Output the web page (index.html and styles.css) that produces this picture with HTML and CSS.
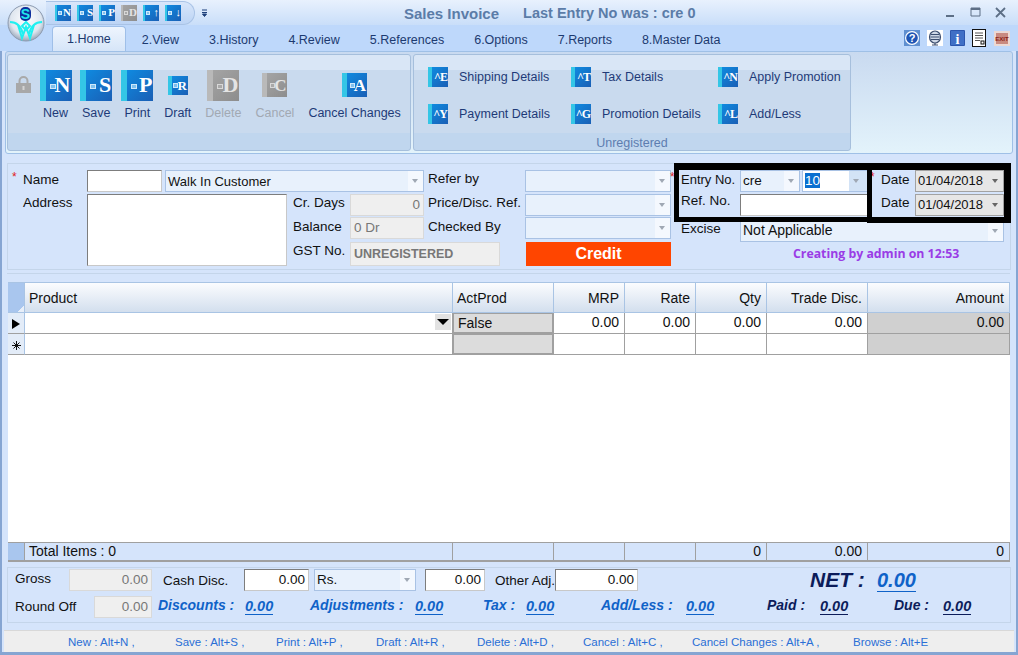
FILE: index.html
```html
<!DOCTYPE html>
<html>
<head>
<meta charset="utf-8">
<title>Sales Invoice</title>
<link rel="stylesheet" href="styles.css">
</head>
<body>
<div class="window">

  <!-- title bar -->
  <div class="titlebar">
    <svg class="logo" width="38" height="38" viewBox="0 0 38 38">
      <defs>
        <radialGradient id="orb" cx="0.5" cy="0.4" r="0.6">
          <stop offset="0" stop-color="#ffffff"/>
          <stop offset="0.7" stop-color="#dfe6ef"/>
          <stop offset="1" stop-color="#98a6b8"/>
        </radialGradient>
      </defs>
      <circle cx="19" cy="19" r="18" fill="url(#orb)" stroke="#8d9bb0"/>
      <rect x="13" y="3" width="11" height="14" rx="5" fill="#0d2f9c"/>
      <text x="18.500" y="14.500" class="logo-s">S</text>
      <g fill="none" stroke="#1ff0f0" stroke-width="2">
        <polyline points="11,21 15,34 19,23 23,34 27,21"/>
        <path d="M3 18 C10 18 14 22 16 30"/>
        <path d="M35 18 C28 18 24 22 22 30"/>
        <path d="M19 18 L15 22 L19 26 L23 22 Z"/>
      </g>
    </svg>
    <div class="qat">
      <span class="bk bk-qat"><i></i><b>N</b></span>
      <span class="bk bk-qat"><i></i><b>S</b></span>
      <span class="bk bk-qat"><i></i><b>P</b></span>
      <span class="bk bk-qat off"><i></i><b>D</b></span>
      <span class="bk bk-qat"><i></i><b>&#8593;</b></span>
      <span class="bk bk-qat"><i></i><b>&#8595;</b></span>
    </div>
    <svg class="qat-more" width="7" height="8" viewBox="0 0 7 8"><path d="M1 1h5M1 3.500h5M1.500 5h4L3.500 7.500z" stroke="#1d3f7a" fill="#1d3f7a" stroke-width="1"/></svg>
    <div class="title"><span>Sales Invoice</span><span class="title-last">Last Entry No was : cre 0</span></div>
    <div class="winbtns">
      <svg width="11" height="11" viewBox="0 0 11 11"><rect x="1" y="8" width="8" height="2" fill="#5d6f86"/></svg>
      <svg width="11" height="11" viewBox="0 0 11 11"><path d="M1 1h9v8H1z" fill="none" stroke="#5d6f86"/><rect x="1" y="1" width="9" height="2" fill="#5d6f86"/></svg>
      <svg width="11" height="11" viewBox="0 0 11 11"><path d="M1 1l9 9M10 1l-9 9" stroke="#5d6f86" stroke-width="1.800"/></svg>
    </div>
  </div>

  <!-- tabs -->
  <div class="tabs">
    <span class="tab active">1.Home</span>
    <span class="tab">2.View</span>
    <span class="tab">3.History</span>
    <span class="tab">4.Review</span>
    <span class="tab">5.References</span>
    <span class="tab">6.Options</span>
    <span class="tab">7.Reports</span>
    <span class="tab">8.Master Data</span>
    <div class="tools">
      <svg width="16" height="16" viewBox="0 0 16 16"><rect width="16" height="16" fill="#5f8fd0"/><circle cx="8" cy="8" r="7" fill="#fff"/><circle cx="8" cy="8" r="5.800" fill="#1f55b5"/><text x="8" y="12" class="tool-q">?</text></svg>
      <svg width="16" height="16" viewBox="0 0 16 16"><rect width="16" height="16" fill="#fff"/><ellipse cx="8" cy="7" rx="5.500" ry="6" fill="#cfd8e6" stroke="#3d4f70" stroke-width="1.200"/><path d="M4 4.500h8M3.500 7h9M4 9.500h8" stroke="#3d4f70"/><path d="M5 15h6M8 13v2" stroke="#3d4f70" stroke-width="1.200"/></svg>
      <svg width="15" height="16" viewBox="0 0 15 16"><rect width="15" height="16" rx="1" fill="#2c56ad"/><rect x="1" y="1" width="13" height="14" fill="#3f6fc6"/><text x="7.500" y="13.500" class="tool-i">i</text></svg>
      <svg width="15" height="18" viewBox="0 0 15 18"><rect x="0.500" y="0.500" width="13" height="17" fill="#fff" stroke="#111"/><path d="M3 4h8M3 6.500h8M3 9h8M3 11.500h5" stroke="#555"/><rect x="9" y="12" width="3" height="3" fill="#fff" stroke="#111"/></svg>
      <svg width="16" height="15" viewBox="0 0 16 15"><rect width="16" height="15" fill="#ecd9d4"/><rect x="2" y="2" width="12" height="11" fill="#c98a80"/><text x="8" y="10" class="tool-x">EXIT</text></svg>
    </div>
  </div>

  <!-- ribbon -->
  <div class="ribbon">
    <div class="group group-home">
      <svg class="lock" width="17" height="17" viewBox="0 0 17 17"><path d="M4.500 8V5a4 4 0 0 1 8 0v3" fill="none" stroke="#a9a9a9" stroke-width="2"/><rect x="1" y="7" width="15" height="10" fill="#a8a8a8"/><rect x="7.500" y="10" width="2" height="4" fill="#d4d4d4"/></svg>
      <button class="rb"><span class="rb-icon"><span class="bk bk-lg"><i></i><b>N</b></span></span>New</button>
      <button class="rb"><span class="rb-icon"><span class="bk bk-lg"><i></i><b>S</b></span></span>Save</button>
      <button class="rb"><span class="rb-icon"><span class="bk bk-lg"><i></i><b>P</b></span></span>Print</button>
      <button class="rb"><span class="rb-icon"><span class="bk bk-dr"><i></i><b>R</b></span></span>Draft</button>
      <button class="rb dim"><span class="rb-icon"><span class="bk bk-lg off"><i></i><b>D</b></span></span>Delete</button>
      <button class="rb dim"><span class="rb-icon"><span class="bk bk-md off"><i></i><b>C</b></span></span>Cancel</button>
      <button class="rb"><span class="rb-icon"><span class="bk bk-md"><i></i><b>A</b></span></span>Cancel Changes</button>
    </div>
    <div class="group group-more">
      <div class="more-grid">
        <span class="mi"><span class="bk bk-sm"><b>^E</b></span>Shipping Details</span>
        <span class="mi"><span class="bk bk-sm"><b>^T</b></span>Tax Details</span>
        <span class="mi"><span class="bk bk-sm"><b>^N</b></span>Apply Promotion</span>
        <span class="mi"><span class="bk bk-sm"><b>^Y</b></span>Payment Details</span>
        <span class="mi"><span class="bk bk-sm"><b>^G</b></span>Promotion Details</span>
        <span class="mi"><span class="bk bk-sm"><b>^L</b></span>Add/Less</span>
      </div>
      <div class="group-cap">Unregistered</div>
    </div>
  </div>

  <!-- invoice header form -->
  <div class="form-panel">
    <div class="form-grid">
      <label class="a-name"><em>*</em>Name</label>
      <div class="fld inp a-nameinp"></div>
      <div class="combo a-namecb">Walk In Customer<span class="arr"></span></div>
      <label class="a-refer">Refer by</label>
      <div class="combo a-refercb"><span class="arr"></span></div>
      <label class="a-entry"><em>*</em>Entry No.</label>
      <div class="combo a-cre">cre<span class="arr"></span></div>
      <div class="combo white a-num"><span class="sel">10</span><span class="arr arr-on"></span></div>
      <label class="a-date1"><em>*</em>Date</label>
      <div class="combo date a-dt1">01/04/2018<span class="arr"></span></div>

      <label class="a-addr">Address</label>
      <div class="fld inp a-addrbox"></div>
      <label class="a-cr">Cr. Days</label>
      <div class="fld off right a-crf">0</div>
      <label class="a-price">Price/Disc. Ref.</label>
      <div class="combo a-pricecb"><span class="arr"></span></div>
      <label class="a-refno">Ref. No.</label>
      <div class="fld inp a-refinp"></div>
      <label class="a-date2">Date</label>
      <div class="combo date a-dt2">01/04/2018<span class="arr"></span></div>

      <label class="a-bal">Balance</label>
      <div class="fld off a-balf">0 Dr</div>
      <label class="a-chk">Checked By</label>
      <div class="combo a-chkcb"><span class="arr"></span></div>
      <label class="a-exc">Excise</label>
      <div class="combo a-exccb">Not Applicable<span class="arr"></span></div>

      <label class="a-gst">GST No.</label>
      <div class="fld off bold a-gstf">UNREGISTERED</div>
      <div class="credit a-credit">Credit</div>
      <div class="creating a-creating">Creating by admin on 12:53</div>
    </div>
    <div class="mark mark-entry"></div>
    <div class="mark mark-date"></div>
  </div>

  <!-- product grid -->
  <div class="grid-panel">
    <table class="items">
      <colgroup>
        <col class="c-h"><col class="c-prod"><col class="c-act"><col class="c-num"><col class="c-num"><col class="c-num"><col class="c-act"><col class="c-amt">
      </colgroup>
      <thead>
        <tr>
          <th class="corner"></th>
          <th>Product</th>
          <th>ActProd</th>
          <th class="r">MRP</th>
          <th class="r">Rate</th>
          <th class="r">Qty</th>
          <th class="r">Trade Disc.</th>
          <th class="r">Amount</th>
        </tr>
      </thead>
      <tbody>
        <tr>
          <td class="rowh"><span class="cur"></span></td>
          <td class="prod"><span class="dd"></span></td>
          <td class="act">False</td>
          <td class="r">0.00</td>
          <td class="r">0.00</td>
          <td class="r">0.00</td>
          <td class="r">0.00</td>
          <td class="r amt">0.00</td>
        </tr>
        <tr>
          <td class="rowh"><svg class="star" width="9" height="9" viewBox="0 0 9 9"><path d="M4.500 0v9M0 4.500h9M1.500 1.500l6 6M7.500 1.500l-6 6" stroke="#111" fill="none"/></svg></td>
          <td></td>
          <td class="act"></td>
          <td></td>
          <td></td>
          <td></td>
          <td></td>
          <td class="amt"></td>
        </tr>
        <tr class="filler"><td colspan="8"></td></tr>
      </tbody>
      <tfoot>
        <tr>
          <td class="foot-h"></td>
          <td>Total Items : 0</td>
          <td></td>
          <td></td>
          <td></td>
          <td class="r">0</td>
          <td class="r">0.00</td>
          <td class="r">0</td>
        </tr>
      </tfoot>
    </table>
  </div>

  <!-- totals -->
  <div class="sum-panel">
    <div class="sum-row sum-one">
      <span class="up">Gross</span>
      <div class="fld off right s-gross">0.00</div>
      <span class="pad-cash">Cash Disc.</span>
      <div class="fld inp right s-cash">0.00</div>
      <div class="combo s-rs">Rs.<span class="arr"></span></div>
      <div class="fld inp right s-adj1">0.00</div>
      <span class="pad-other">Other Adj.</span>
      <div class="fld inp right s-adj2">0.00</div>
      <span></span>
      <span class="net">NET :</span>
      <span class="net-val">0.00</span>
    </div>
    <div class="sum-row sum-two">
      <span>Round Off</span>
      <div class="fld off right s-round">0.00</div>
      <span class="sl blue pad-disc">Discounts :</span>
      <span class="sv blue">0.00</span>
      <span class="sl blue">Adjustments :</span>
      <span class="sv blue">0.00</span>
      <span class="sl blue">Tax :</span>
      <span class="sv blue">0.00</span>
      <span class="sl blue">Add/Less :</span>
      <span class="sv blue">0.00</span>
      <span class="sl">Paid :</span>
      <span class="sv">0.00</span>
      <span class="sl">Due :</span>
      <span class="sv">0.00</span>
    </div>
  </div>

  <!-- shortcuts -->
  <div class="statusbar">
    <span>New : Alt+N ,</span>
    <span>Save : Alt+S ,</span>
    <span>Print : Alt+P ,</span>
    <span>Draft : Alt+R ,</span>
    <span>Delete : Alt+D ,</span>
    <span>Cancel : Alt+C ,</span>
    <span>Cancel Changes : Alt+A ,</span>
    <span>Browse : Alt+E</span>
  </div>
</div>
</body>
</html>
```

FILE: styles.css
```css
html, body{ margin:0; padding:0; }
body{ font-family:"Liberation Sans", Arial, sans-serif; font-size:13.500px; color:#111; }

.window{ position:relative; width:1018px; height:655px; overflow:hidden; background:#d5e4fb; box-shadow:inset 2px 0 #86a5d2, inset -2px 0 #86a5d2, inset 0 -3px #86a5d2; }

/* title bar */
.titlebar{ position:relative; display:flex; align-items:center; height:25px; background:linear-gradient(#e8f1fd, #c9def9); }
.logo{ position:absolute; left:7px; top:4px; z-index:2; }
.logo-s{ font:bold 14px "Liberation Sans", sans-serif; fill:#22e6ec; text-anchor:middle; }
.qat{ display:flex; align-items:center; gap:6px; height:22px; margin-left:46px; padding:0 13px 0 9px; border:1px solid #a9c3e6; border-left:0; border-radius:0 12px 12px 0; background:linear-gradient(#d8e6fa, #bcd4f5); }
.qat-more{ margin-left:6px; }
.title{ position:absolute; left:404px; top:5px; display:flex; gap:24px; font-size:15px; font-weight:bold; color:#5b7ca8; white-space:nowrap; }
.title-last{ font-size:14.500px; }
.winbtns{ display:flex; gap:14px; margin-left:auto; margin-right:12px; }

/* book icons */
.bk{ position:relative; flex:none; display:inline-flex; align-items:center; justify-content:flex-end; box-sizing:border-box; background:linear-gradient(135deg, #0f8ae0, #1a5fb5); border-left:solid #34c6e6; color:#fff; font-family:"Liberation Serif", serif; font-weight:bold; line-height:1; }
.bk i{ position:absolute; background:#7fc0ee; border:1px solid #cfe8fa; box-sizing:border-box; }
.bk.off{ background:linear-gradient(135deg, #a4a4a4, #8d8d8d); border-left-color:#b9b9b9; color:#e4e4e4; }
.bk.off i{ background:#a9a9a9; border-color:#d8d8d8; }
.bk-lg{ width:32px; height:31px; border-left-width:6px; font-size:22px; padding-right:1px; }
.bk-lg i{ left:4px; top:14px; width:6px; height:5px; }
.bk-md{ width:25px; height:24px; border-left-width:5px; font-size:17px; padding-right:1px; }
.bk-md i{ left:3px; top:10px; width:5px; height:5px; }
.bk-dr{ width:20px; height:19px; border-left-width:4px; font-size:13px; padding-right:1px; }
.bk-dr i{ left:1px; top:7px; width:5px; height:5px; }
.bk-qat{ width:16px; height:16px; border-left-width:2px; font-size:11px; }
.bk-qat i{ left:1px; top:6px; width:4px; height:4px; }
.bk-sm{ width:20px; height:20px; border-left-width:4px; font-size:12px; letter-spacing:-1px; padding-right:1px; }

/* tabs */
.tabs{ display:flex; align-items:flex-end; height:26px; padding-left:52px; background:#bed8fb; color:#1c3a70; font-size:12.500px; box-sizing:border-box; }
.tab{ height:24px; line-height:26px; padding:0 15px; white-space:nowrap; }
.tab.active{ padding:0 14px; margin-right:1px; background:linear-gradient(#eef5fe, #d6e5f8); border:1px solid #9fbfe8; border-bottom:0; border-radius:4px 4px 0 0; line-height:25px; }
.tools{ display:flex; align-items:center; gap:7px; margin-left:auto; margin-right:8px; align-self:center; }

/* ribbon */
.ribbon{ display:flex; gap:2px; height:103px; box-sizing:border-box; margin:0 5px; padding:2px 1px; background:linear-gradient(#c9daf0, #e3f3fb); border:1px solid #9fc0e6; border-radius:3px; color:#1e3a78; font-size:12.500px; }
.group{ flex:none; box-sizing:border-box; height:97px; border:1px solid #a6bfdc; border-radius:3px; background:linear-gradient(#d9e6f6 0, #d9e6f6 15px, #c9daee 15px, #c9daee 78px, #c0d6ee 78px); }
.group-home{ display:flex; width:404px; padding:14px 0 0 7px; }
.lock{ flex:none; margin:7px 4px 0 0; }
.rb{ display:flex; flex-direction:column; align-items:center; padding:0 7px; border:0; background:none; font:12.500px "Liberation Sans", sans-serif; color:#1e3a78; white-space:nowrap; height:60px; justify-content:flex-start; }
.rb-icon{ display:flex; align-items:center; justify-content:center; width:20px; height:32px; margin-bottom:5px; }
.rb.dim{ color:#a2a9b3; }
.group-more{ width:438px; display:flex; flex-direction:column; }
.more-grid{ display:grid; grid-template-columns:143px 147px 120px; grid-auto-rows:37px; padding:11px 0 0 14px; height:78px; box-sizing:border-box; }
.mi{ display:flex; align-items:center; gap:11px; white-space:nowrap; height:22px; }
.group-cap{ text-align:center; color:#5d7db0; font-size:12.500px; line-height:21px; }

/* header form */
.form-panel{ position:relative; box-sizing:border-box; height:107px; margin:9px 7px 0 7px; border:1px solid #c4d5ea; }
.form-grid{ display:grid; padding:6px 0 0 15px; grid-template-rows:24px 23px 25px 24px; grid-template-columns:
  [name] 64px [nameinp] 75px [nameinp-e] 3px [namecb] 122px [box-e] 6px [cr] 57px [crf] 74px [crf-e] 4px [refer] 72px [gst-e] 25px [cb] 146px [cb-e] 10px [entry] 59px [cre] 60px [cre-e] 2px [num] 66px [num-e] 13px [date] 34px [dt] 89px [dt-e]; }
.form-grid label{ line-height:18px; white-space:nowrap; position:relative; }
.form-grid label em{ position:absolute; left:-11px; top:-2px; font-style:normal; font-size:12px; color:#e02020; }

.fld{ box-sizing:border-box; height:22px; line-height:20px; padding:0 3px; white-space:nowrap; overflow:hidden; }
.fld.inp{ background:#fff; border:1px solid #7d7d7d; border-right-color:#c8c8c8; border-bottom-color:#c8c8c8; }
.fld.off{ background:#efefef; border:1px solid #d9d9d9; color:#777; }
.fld.right{ text-align:right; }
.fld.bold{ font-weight:bold; font-size:12.500px; }

.combo{ position:relative; box-sizing:border-box; height:22px; line-height:20px; padding:0 2px; background:#e8f1fc; border:1px solid #a9c2e4; white-space:nowrap; }
.combo .arr{ position:absolute; right:0; top:0; bottom:0; width:15px; background:#f4f8fe; }
.combo .arr:after{ content:""; position:absolute; left:4px; top:8px; border:3.500px solid transparent; border-top:4px solid #a0a8b4; border-bottom:0; }
.combo.white{ background:#fff; }
.combo .arr-on{ width:18px; background:#d3e3f6; }
.combo.date{ background:#e6e6e6; border-color:#a2a2a2; font-size:13px; }
.combo.date .arr{ background:none; }
.combo.date .arr:after{ border-top-color:#666; }
.sel{ background:#0a6fd0; color:#fff; }

.a-name{ grid-area:1 / name; padding-top:1px; }
.a-nameinp{ grid-area:1 / nameinp / 1 / nameinp-e; }
.a-namecb{ grid-area:1 / namecb / 1 / crf-e; font-size:13px; line-height:22px; }
.a-refer{ grid-area:1 / refer / 1 / cb; }
.a-refercb{ grid-area:1 / cb / 1 / cb-e; }
.a-entry{ grid-area:1 / entry; padding-top:1px; font-size:13px; }
.a-cre{ grid-area:1 / cre / 1 / cre-e; }
.a-num{ grid-area:1 / num / 1 / num-e; }
.a-date1{ grid-area:1 / date; padding-top:1px; }
.a-dt1{ grid-area:1 / dt / 1 / dt-e; }
.a-addr{ grid-area:2 / name; }
.a-addrbox{ grid-area:2 / nameinp / 5 / box-e; height:72px; }
.a-cr{ grid-area:2 / cr; }
.a-crf{ grid-area:2 / crf / 2 / crf-e; }
.a-price{ grid-area:2 / refer / 2 / cb; }
.a-pricecb{ grid-area:2 / cb / 2 / cb-e; }
.a-refno{ grid-area:2 / entry; margin-top:-2px; }
.a-refinp{ grid-area:2 / cre / 2 / num-e; }
.a-date2{ grid-area:2 / date; }
.a-dt2{ grid-area:2 / dt / 2 / dt-e; }
.a-bal{ grid-area:3 / cr; padding-top:1px; }
.a-balf{ grid-area:3 / crf / 3 / crf-e; }
.a-chk{ grid-area:3 / refer / 3 / cb; padding-top:1px; }
.a-chkcb{ grid-area:3 / cb / 3 / cb-e; }
.a-exc{ grid-area:3 / entry; padding-top:3px; }
.a-exccb{ grid-area:3 / cre / 3 / dt-e; margin-top:3px; font-size:14px; line-height:19px; }
.a-gst{ grid-area:4 / cr; }
.a-gstf{ grid-area:4 / crf / 4 / gst-e; height:24px; line-height:22px; }
.a-credit{ grid-area:4 / cb / 4 / cb-e; }
.a-creating{ grid-area:4 / entry / 4 / dt-e; }

.credit{ height:24px; line-height:24px; margin-left:1px; background:#ff4500; color:#fff; font-size:16px; font-weight:bold; text-align:center; }
.creating{ padding:3px 0 0 112px; font-family:"Open Sans", sans-serif; font-size:12.300px; font-weight:bold; color:#9a3ce6; white-space:nowrap; }

.mark{ position:absolute; box-sizing:border-box; border:solid #000; }
.mark-entry{ left:666px; top:-1px; width:198px; height:59px; border-width:7px 5px 5px 5px; }
.mark-date{ left:859px; top:-1px; width:144px; height:60px; border-width:7px 7px 6px 5px; }

/* product grid */
.grid-panel{ box-sizing:border-box; height:287px; margin:3px 8px 0 7px; padding-top:8px; border:1px solid #c4d5ea; border-width:1px 0 0 0; }
.items{ width:1002px; margin-left:1px; table-layout:fixed; border-collapse:separate; border-spacing:0; background:#fff; font-size:14px; }
.c-h{ width:17px; }
.c-prod{ width:428px; }
.c-act{ width:101px; }
.c-num{ width:71px; }
.c-amt{ width:142px; }
.items th, .items td{ box-sizing:border-box; padding:0 5px 0 4px; overflow:hidden; white-space:nowrap; font-weight:normal; text-align:left; }
.items th{ height:31px; background:linear-gradient(#fbfcfe, #d3dfee); border-top:1px solid #a9c4e4; border-right:1px solid #a9c4e4; border-bottom:1px solid #a9c4e4; }
.items tbody td{ height:21px; padding-bottom:2px; border-right:1px solid #a0a0a0; border-bottom:1px solid #a0a0a0; }
.items .r{ text-align:right; }
.items .corner{ background:linear-gradient(135deg, #a9c6ee 0, #a9c6ee 85%, #e8eff9 85%); }
.items .rowh{ padding:0; background:#e3ecf8; text-align:center; border-right-color:#a9c4e4; }
.cur{ display:inline-block; border:5px solid transparent; border-left:8px solid #000; border-right:0; vertical-align:middle; }
.star{ display:inline-block; vertical-align:middle; }
.items .prod{ position:relative; }
.dd{ position:absolute; right:1px; top:1px; width:16px; height:16px; background:#e2e2e2; }
.dd:after{ content:""; position:absolute; left:2px; top:5px; border:6px solid transparent; border-top:6px solid #000; border-bottom:0; }
.items .act{ background:#dcdcdc; border:2px solid #a0a0a0; border-width:1px 2px 2px 1px; padding:0 0 0 4px; }
.items .amt{ background:#d0d0d0; }
.items .filler td{ height:187px; border:0; padding:0; }
.items tfoot td{ height:17px; line-height:17px; padding-top:0; background:#d5e4fb; border-top:1px solid #a0a0a0; border-right:1px solid #a0a0a0; border-bottom:2px solid #a0a0a0; }
.items .foot-h{ background:#a9c6ee; }

/* totals */
.sum-panel{ box-sizing:border-box; height:56px; margin:7px 7px 0 7px; padding:0 0 0 7px; border:1px solid #c4d5ea; }
.sum-row{ display:grid; align-items:center; white-space:nowrap; }
.sum-one{ height:24px; grid-template-columns:54px 83px 92px 65px 107px 69px 70px 83px 172px 67px 60px; }
.sum-two{ height:27px; margin-top:1px; grid-template-columns:79px 58px 93px 65px 105px 68px 43px 75px 85px 81px 53px 74px 49px 40px; }
.up{ margin-top:-3px; }
.s-cash, .s-adj1, .s-rs{ justify-self:end; }
.s-cash{ width:65px; }
.s-rs{ width:102px; }
.s-adj1{ width:60px; }
.pad-cash{ padding-left:11px; }
.pad-other{ padding-left:10px; }
.pad-disc{ padding-left:6px; }
.sl, .sv{ font-weight:bold; font-style:italic; font-size:14px; color:#0c1c5a; }
.sl{ margin-top:-4px; }
.sv{ font-size:14.500px; justify-self:start; margin-top:1px; border-bottom:1px solid currentColor; line-height:15px; }
.blue{ color:#0f62c8; }
.net{ font:italic bold 21px "Liberation Sans", sans-serif; color:#0c1c5a; }
.net-val{ font:italic bold 20px "Liberation Sans", sans-serif; color:#0f62c8; border-bottom:1px solid #0f62c8; justify-self:start; line-height:22px; }

/* shortcuts */
.statusbar{ display:grid; grid-template-columns:107px 101px 100px 101px 106px 109px 161px auto; align-items:center; box-sizing:border-box; height:22px; margin:7px 4px 0 4px; padding-left:64px; background:#eeeeee; border-top:1px solid #d8d8d8; color:#2a6fd6; font-size:11.500px; white-space:nowrap; }

/* svg text */
.tool-q{ font:bold 11px "Liberation Sans", sans-serif; fill:#fff; text-anchor:middle; }
.tool-i{ font:bold 14px "Liberation Serif", serif; fill:#fff; text-anchor:middle; }
.tool-x{ font:bold 6px "Liberation Sans", sans-serif; fill:#8b1d16; text-anchor:middle; }
```
